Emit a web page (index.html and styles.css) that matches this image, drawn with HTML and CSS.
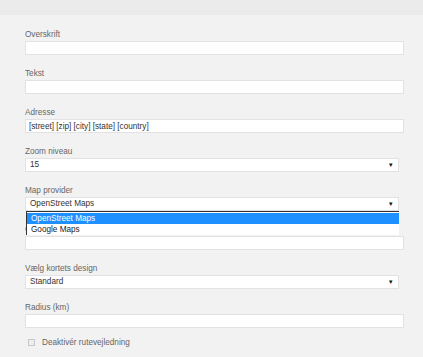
FILE: index.html
```html
<!DOCTYPE html>
<html lang="da">
<head>
    <meta charset="UTF-8">
    <title>Kort indstillinger</title>
    <link rel="stylesheet" href="styles.css">
</head>
<body>
    <div class="topbar"></div>
    <form class="settings">
        <div class="field">
            <label>Overskrift</label>
            <input type="text" class="text-input">
        </div>
        <div class="field">
            <label>Tekst</label>
            <input type="text" class="text-input">
        </div>
        <div class="field">
            <label>Adresse</label>
            <input type="text" class="text-input" value="[street] [zip] [city] [state] [country]">
        </div>
        <div class="field">
            <label>Zoom niveau</label>
            <div class="select"><span>15</span><span class="arrow">&#9662;</span></div>
        </div>
        <div class="field">
            <label>Map provider</label>
            <div class="select-wrap">
                <div class="select"><span>OpenStreet Maps</span><span class="arrow">&#9662;</span></div>
                <ul class="dropdown">
                    <li class="selected">OpenStreet Maps</li>
                    <li>Google Maps</li>
                </ul>
            </div>
        </div>
        <div class="field">
            <label>Google Maps API nøgle</label>
            <input type="text" class="text-input">
        </div>
        <div class="field">
            <label>Vælg kortets design</label>
            <div class="select"><span>Standard</span><span class="arrow">&#9662;</span></div>
        </div>
        <div class="field">
            <label>Radius (km)</label>
            <input type="text" class="text-input">
        </div>
        <div class="check-row">
            <span class="checkbox"></span>
            <span>Deaktivér rutevejledning</span>
        </div>
    </form>
</body>
</html>
```

FILE: styles.css
```css
body {
    margin: 0;
    background-color: #f2f2f2;
    font-family: "Liberation Sans", Arial, sans-serif;
    font-size: 8.2px;
    color: #333;
}
.topbar {
    height: 15px;
    background-color: #ebebeb;
}
.settings {
    padding: 15px 0 0 25px;
}
.field {
    margin-bottom: 14px;
}
.field label {
    display: block;
    height: 10px;
    line-height: 10px;
    margin-bottom: 1px;
    color: #666;
}
.text-input {
    display: block;
    box-sizing: border-box;
    width: 379px;
    height: 14px;
    margin: 0;
    padding: 0 0 0 3px;
    border: 1px solid #e2e2e2;
    background: #fff;
    font-family: inherit;
    font-size: 8.2px;
    color: #333;
    outline: none;
}
.select {
    box-sizing: border-box;
    width: 374px;
    height: 14px;
    padding: 0 5px 0 4px;
    border: 1px solid #e2e2e2;
    background: #fff;
    display: flex;
    align-items: center;
    justify-content: space-between;
    line-height: 12px;
}
.arrow {
    font-size: 7px;
    color: #111;
}
.select-wrap {
    position: relative;
    width: 374px;
}
.dropdown {
    position: absolute;
    top: 100%;
    left: 1px;
    right: 0;
    margin: 0;
    padding: 1px 0 0;
    list-style: none;
    background: #fff;
    border-top: 1px solid #333;
    border-left: 1px solid #333;
    height: 22px;
    overflow: hidden;
    z-index: 2;
}
.dropdown li {
    height: 11px;
    line-height: 11px;
    padding-left: 4px;
    color: #222;
}
.dropdown li.selected {
    background-color: #1e90ff;
    color: #fff;
}
.check-row {
    display: flex;
    align-items: center;
    gap: 7px;
    margin-top: -4px;
    padding-left: 3px;
    color: #666;
}
.checkbox {
    box-sizing: border-box;
    width: 7px;
    height: 7px;
    border: 1px solid #c8c8c8;
    background: #eee;
}
```
